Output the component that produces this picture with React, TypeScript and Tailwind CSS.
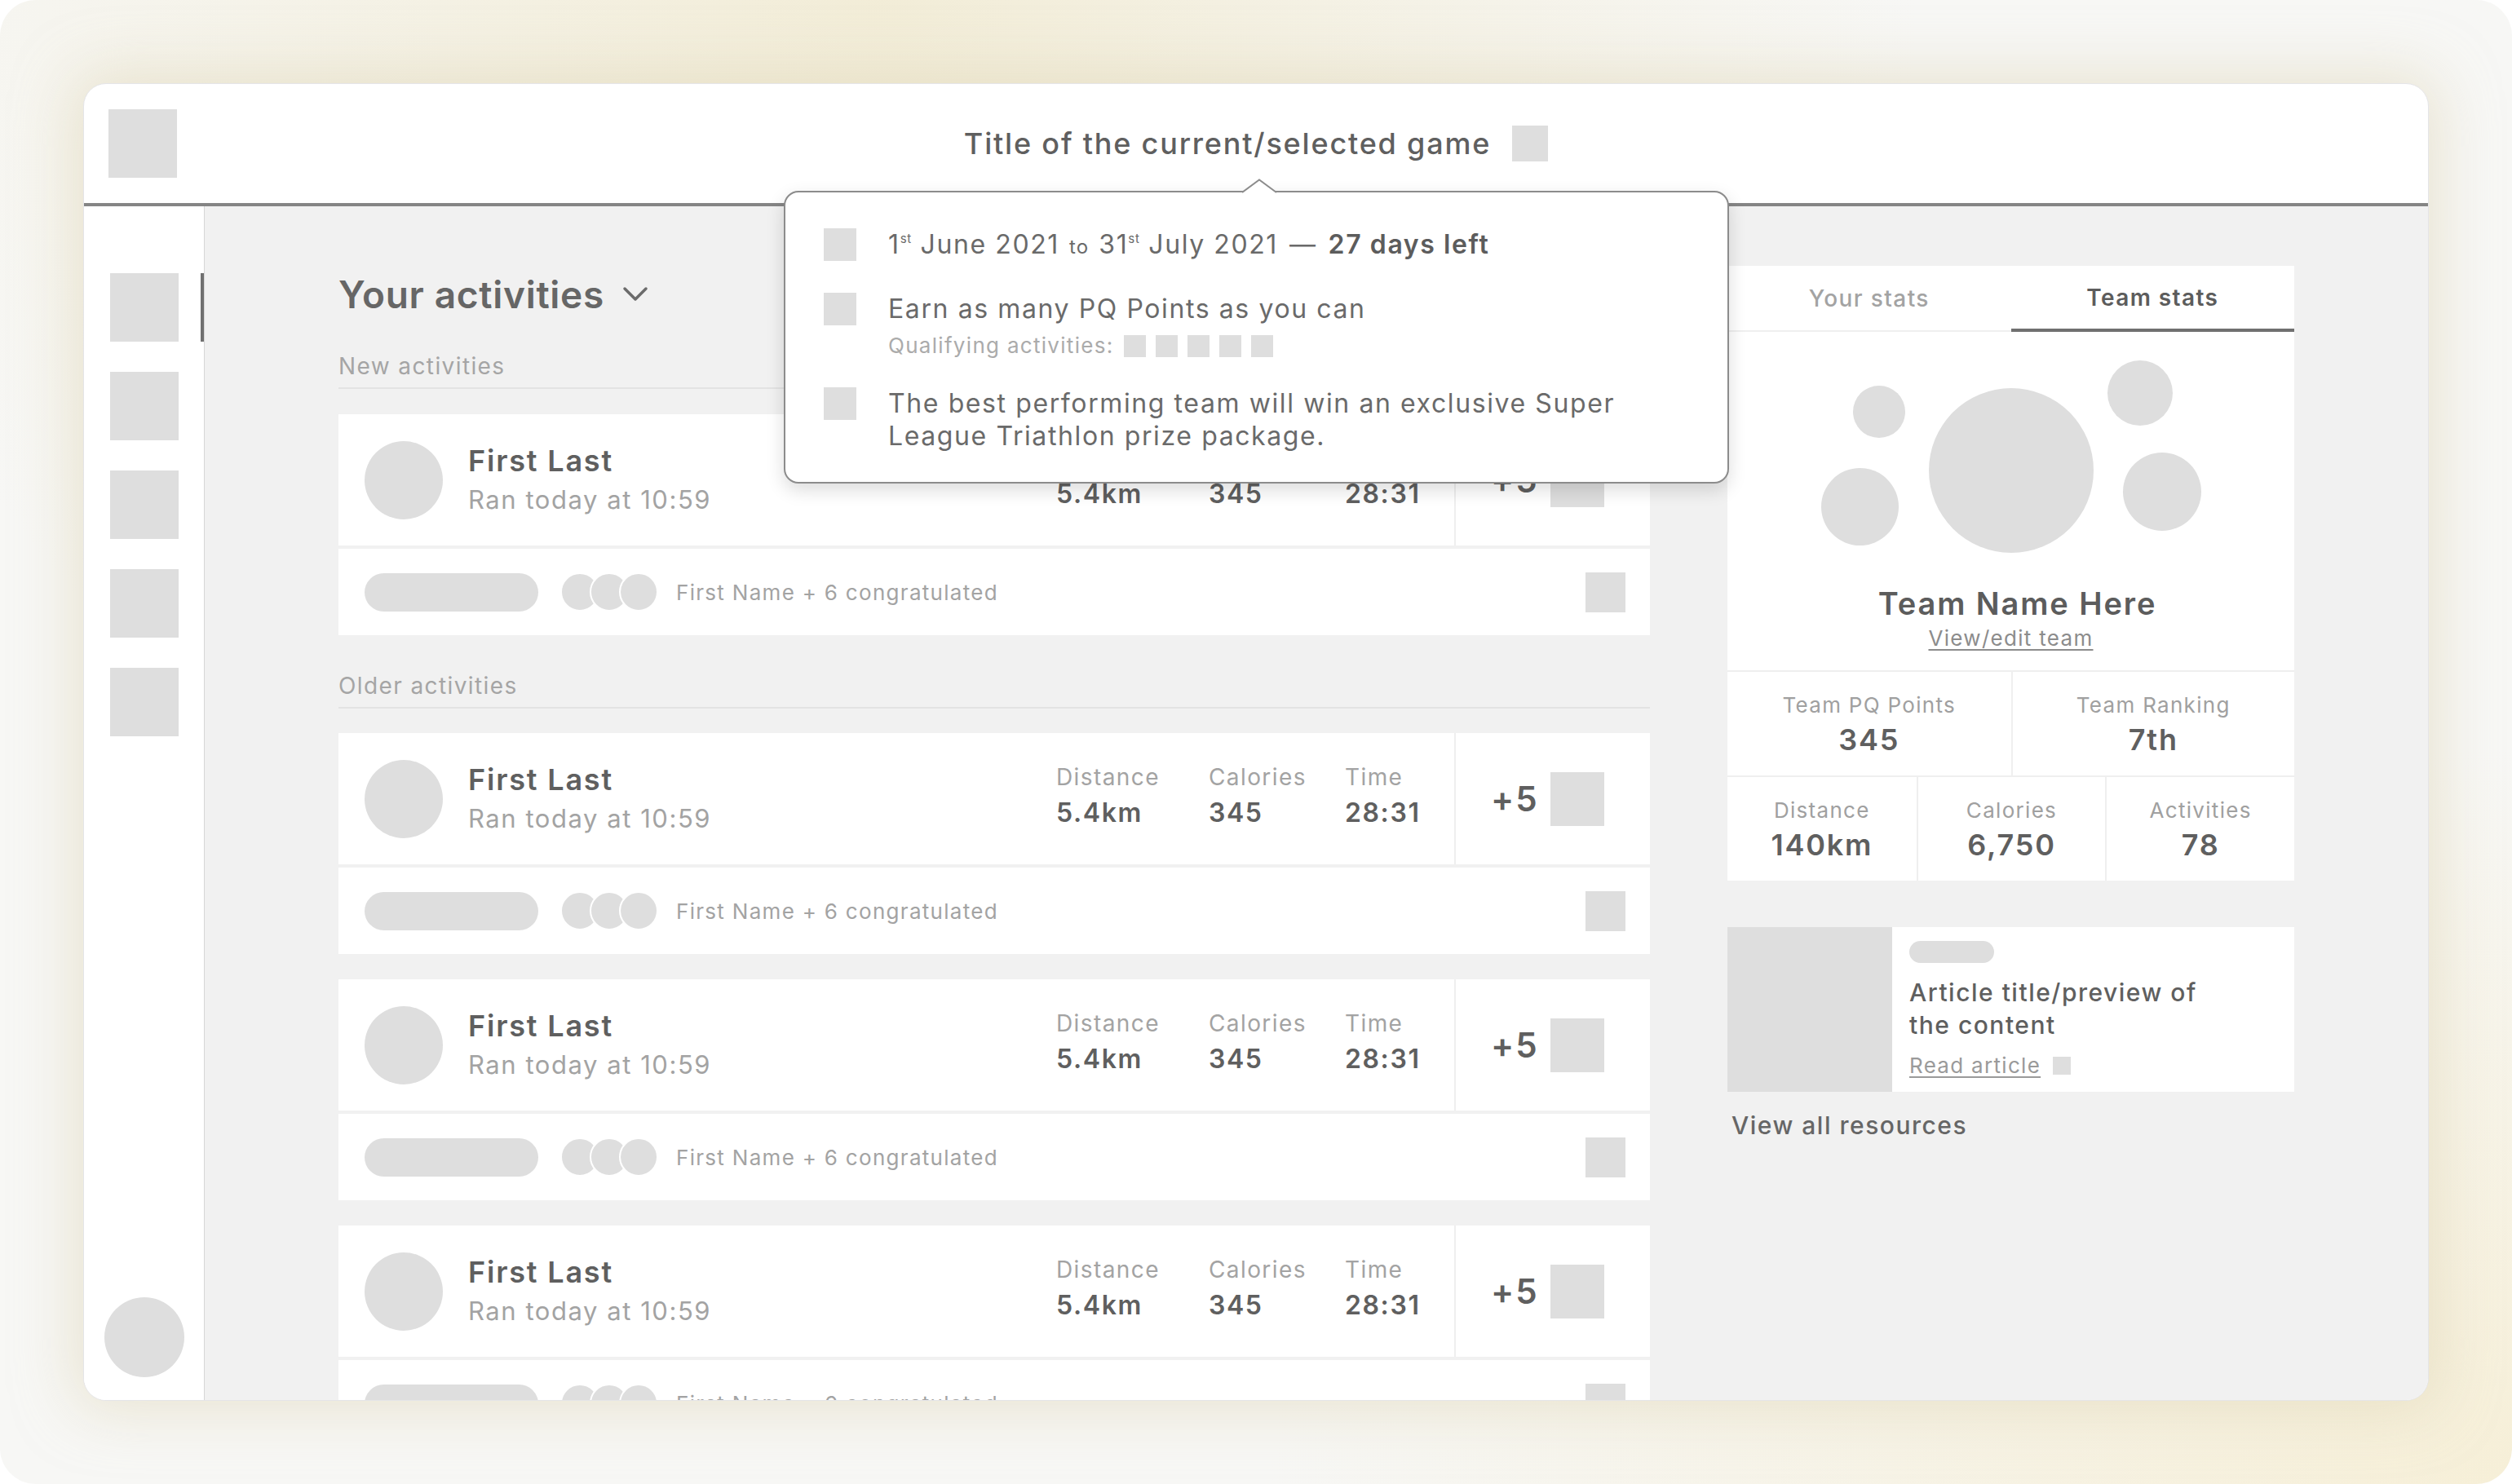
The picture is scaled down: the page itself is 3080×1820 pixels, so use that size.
import React from 'react';

const font = { fontFamily: 'Inter, "Noto Sans", sans-serif' };

const navItems = [true, false, false, false, false];

function Sidebar() {
  return (
    <aside className="flex w-[148px] shrink-0 flex-col items-center border-r border-[#d6d6d6] bg-white pt-[82px] pb-[28px]">
      <div className="flex w-full flex-col gap-[37px]">
        {navItems.map((active, i) => (
          <div key={i} className="relative flex h-[84px] w-full justify-center">
            <div className="h-[84px] w-[84px] bg-[#dedede]" />
            {active && <span className="absolute right-0 top-0 h-full w-[4px] bg-[#707070]" />}
          </div>
        ))}
      </div>
      <div className="mt-auto h-[98px] w-[98px] rounded-full bg-[#dedede]" />
    </aside>
  );
}

const stats = [
  { label: 'Distance', value: '5.4km', w: 'w-[187px]' },
  { label: 'Calories', value: '345', w: 'w-[167px]' },
  { label: 'Time', value: '28:31', w: 'w-[134px]' },
];

function ActivityCard() {
  return (
    <div className="flex flex-col gap-[4px]">
      <div className="flex h-[161px] items-center bg-white">
        <div className="ml-[32px] h-[96px] w-[96px] shrink-0 rounded-full bg-[#dedede]" />
        <div className="ml-[31px] flex flex-1 flex-col gap-[4px]">
          <div className="text-[36px] font-semibold leading-[44px] text-[#5f5f5f]">First Last</div>
          <div className="text-[31px] leading-[44px] text-[#a3a3a3]">Ran today at 10:59</div>
        </div>
        <div className="-mt-[10px] flex">
          {stats.map((s) => (
            <div key={s.label} className={`${s.w} flex flex-col gap-[4px]`}>
              <span className="text-[28px] leading-[40px] text-[#a3a3a3]">{s.label}</span>
              <span className="text-[32px] font-semibold leading-[40px] text-[#5f5f5f]">{s.value}</span>
            </div>
          ))}
        </div>
        <div className="flex h-full w-[240px] items-center justify-between border-l-2 border-[#efefef] pl-[43px] pr-[56px]">
          <span className="text-[42px] font-semibold leading-none text-[#5f5f5f]">+5</span>
          <div className="h-[66px] w-[66px] bg-[#dedede]" />
        </div>
      </div>
      <div className="flex h-[106px] items-center bg-white pl-[32px] pr-[30px]">
        <div className="h-[47px] w-[213px] rounded-full bg-[#dedede]" />
        <div className="ml-[27px] flex">
          <div className="h-[48px] w-[48px] rounded-full border-2 border-white bg-[#dedede]" />
          <div className="-ml-[12px] h-[48px] w-[48px] rounded-full border-2 border-white bg-[#dedede]" />
          <div className="-ml-[12px] h-[48px] w-[48px] rounded-full border-2 border-white bg-[#dedede]" />
        </div>
        <span className="ml-[22px] flex-1 text-[26px] text-[#a3a3a3]">First Name + 6 congratulated</span>
        <div className="h-[49px] w-[49px] bg-[#dedede]" />
      </div>
    </div>
  );
}

function SectionLabel({ text, className }: { text: string; className: string }) {
  return (
    <div className={className}>
      <div className="text-[28px] leading-[28px] text-[#a5a5a5]">{text}</div>
      <div className="mt-[12px] h-[2px] bg-[#e3e3e3]" />
    </div>
  );
}

function ActivityColumn() {
  return (
    <div className="flex w-[1608px] shrink-0 flex-col pt-[12px]">
      <div className="flex h-[46px] items-center">
        <h1 className="text-[46px] font-semibold leading-[46px] tracking-[0.015em]! text-[#666]">Your activities</h1>
        <svg className="ml-[22px]" width="32" height="20" viewBox="0 0 32 20" fill="none">
          <path d="M3 3 L16 16 L29 3" stroke="#6b6b6b" strokeWidth="3.5" strokeLinecap="round" strokeLinejoin="round" />
        </svg>
      </div>
      <SectionLabel text="New activities" className="mt-[51px]" />
      <div className="mt-[31px]">
        <ActivityCard />
      </div>
      <SectionLabel text="Older activities" className="mt-[48px]" />
      <div className="mt-[30px] flex flex-col gap-[31px]">
        <ActivityCard />
        <ActivityCard />
        <ActivityCard />
      </div>
    </div>
  );
}

function StatCell({ label, value, border }: { label: string; value: string; border?: boolean }) {
  return (
    <div className={border ? 'flex flex-col items-center border-l-2 border-[#efefef] pt-[26px] pb-[24px]' : 'flex flex-col items-center pt-[26px] pb-[24px]'}>
      <span className="text-[26px] leading-[30px] text-[#a0a0a0]">{label}</span>
      <span className="mt-[7px] text-[36px] font-semibold leading-[40px] text-[#5f5f5f]">{value}</span>
    </div>
  );
}

function TeamStats() {
  return (
    <div className="bg-white">
      <div className="flex">
        <div className="flex h-[81px] flex-1 items-center justify-center border-b-2 border-[#efefef] text-[28px] font-medium text-[#a3a3a3]">
          Your stats
        </div>
        <div className="flex h-[81px] flex-1 items-center justify-center border-b-4 border-[#707070] text-[28px] font-semibold text-[#5c5c5c]">
          Team stats
        </div>
      </div>
      <div className="relative h-[311px]">
        <div className="absolute left-[247px] top-[69px] h-[202px] w-[202px] rounded-full bg-[#dedede]" />
        <div className="absolute left-[154px] top-[66px] h-[64px] w-[64px] rounded-full bg-[#dedede]" />
        <div className="absolute left-[115px] top-[167px] h-[95px] w-[95px] rounded-full bg-[#dedede]" />
        <div className="absolute left-[466px] top-[35px] h-[80px] w-[80px] rounded-full bg-[#dedede]" />
        <div className="absolute left-[485px] top-[148px] h-[96px] w-[96px] rounded-full bg-[#dedede]" />
      </div>
      <div className="flex flex-col items-center pb-[24px]">
        <div className="ml-[16px] text-[38px] font-semibold leading-[44px] text-[#5c5c5c]">Team Name Here</div>
        <a className="mt-[6px] text-[26px] leading-[30px] text-[#8c8c8c] underline underline-offset-4">View/edit team</a>
      </div>
      <div className="grid grid-cols-2 border-t-2 border-[#efefef]">
        <StatCell label="Team PQ Points" value="345" />
        <StatCell label="Team Ranking" value="7th" border />
      </div>
      <div className="grid grid-cols-3 border-t-2 border-[#efefef]">
        <StatCell label="Distance" value="140km" />
        <StatCell label="Calories" value="6,750" border />
        <StatCell label="Activities" value="78" border />
      </div>
    </div>
  );
}

function ArticleCard() {
  return (
    <div className="mt-[57px] flex h-[202px] bg-white">
      <div className="h-full w-[202px] shrink-0 bg-[#dedede]" />
      <div className="flex flex-col pl-[21px] pt-[17px]">
        <div className="h-[27px] w-[104px] rounded-full bg-[#dedede]" />
        <div className="mt-[16px] text-[30px] font-medium leading-[40px] text-[#5f5f5f]">
          Article title/preview of
          <br />
          the content
        </div>
        <div className="mt-[15px] flex items-center">
          <a className="text-[26px] leading-[30px] text-[#9a9a9a] underline underline-offset-4">Read article</a>
          <div className="ml-[15px] h-[22px] w-[22px] bg-[#dedede]" />
        </div>
      </div>
    </div>
  );
}

function Popover() {
  return (
    <div className="absolute left-[858px] top-[131px] z-10 w-[1159px] rounded-[18px] border-2 border-[#8c8c8c] bg-white pl-[47px] pt-[44px] pb-[36px] shadow-[0_8px_22px_rgba(0,0,0,0.14)]">
      <svg className="absolute left-[559px] top-[-17px]" width="44" height="19" viewBox="0 0 44 19" fill="none">
        <path d="M0 17.5 L22 1.5 L44 17.5 L44 19 L0 19 Z" fill="white" />
        <path d="M1 17 L22 1.5 L43 17" stroke="#8c8c8c" strokeWidth="2" fill="none" />
      </svg>
      <div className="flex items-start gap-[39px]">
        <div className="h-[40px] w-[40px] shrink-0 bg-[#dedede]" />
        <div className="text-[32px] leading-[40px] text-[#6a6a6a]">
          1<sup className="-top-[13px] text-[15px]">st</sup> June 2021
          <span className="mx-[12px] text-[24px]">to</span>
          31<sup className="-top-[13px] text-[15px]">st</sup> July 2021
          <span className="mx-[14px]">—</span>
          <span className="font-semibold text-[#5c5c5c]">27 days left</span>
        </div>
      </div>
      <div className="mt-[36px] flex items-start gap-[39px]">
        <div className="h-[40px] w-[40px] shrink-0 bg-[#dedede]" />
        <div className="flex flex-col">
          <div className="text-[32px] leading-[40px] text-[#6a6a6a]">Earn as many PQ Points as you can</div>
          <div className="mt-[10px] flex items-center">
            <span className="text-[26px] leading-[30px] text-[#ababab]">Qualifying activities:</span>
            <div className="ml-[12px] flex gap-[12px]">
              <div className="h-[27px] w-[27px] bg-[#dedede]" />
              <div className="h-[27px] w-[27px] bg-[#dedede]" />
              <div className="h-[27px] w-[27px] bg-[#dedede]" />
              <div className="h-[27px] w-[27px] bg-[#dedede]" />
              <div className="h-[27px] w-[27px] bg-[#dedede]" />
            </div>
          </div>
        </div>
      </div>
      <div className="mt-[36px] flex items-start gap-[39px]">
        <div className="h-[40px] w-[40px] shrink-0 bg-[#dedede]" />
        <div className="text-[32px] leading-[40px] text-[#6a6a6a]">
          The best performing team will win an exclusive Super
          <br />
          League Triathlon prize package.
        </div>
      </div>
    </div>
  );
}

export default function App() {
  return (
    <div className="h-[1820px] w-[3080px] overflow-hidden bg-white [&_*]:tracking-[0.05em]" style={font}>
      <div className="h-full w-full rounded-[44px] bg-[#f7f7f5] bg-[radial-gradient(ellipse_at_35%_0%,rgba(241,234,208,0.8),transparent_45%),radial-gradient(ellipse_at_100%_100%,rgba(246,237,208,0.8),transparent_35%)] p-[102px]">
        <div className="relative flex h-full w-full flex-col overflow-hidden rounded-[28px] border border-[#e5e5e8] bg-white shadow-[0_0_70px_12px_rgba(222,214,182,0.55)]">
          <header className="flex h-[150px] shrink-0 items-center border-b-4 border-[#858585] px-[30px]">
            <div className="h-[84px] w-[84px] bg-[#dedede]" />
            <div className="flex flex-1 items-center justify-center">
              <span className="text-[36px] font-medium text-[#5f5f5f]">Title of the current/selected game</span>
              <div className="ml-[26px] h-[44px] w-[44px] bg-[#dedede]" />
            </div>
            <div className="w-[84px]" />
          </header>
          <div className="flex min-h-0 flex-1">
            <Sidebar />
            <main className="flex flex-1 gap-[95px] overflow-hidden bg-[#f1f1f1] pl-[164px] pt-[73px]">
              <ActivityColumn />
              <div className="flex w-[695px] shrink-0 flex-col">
                <TeamStats />
                <ArticleCard />
                <div className="mt-[23px] pl-[5px] text-[30px] font-medium leading-[36px] text-[#666]">View all resources</div>
              </div>
            </main>
          </div>
          <Popover />
        </div>
      </div>
    </div>
  );
}
